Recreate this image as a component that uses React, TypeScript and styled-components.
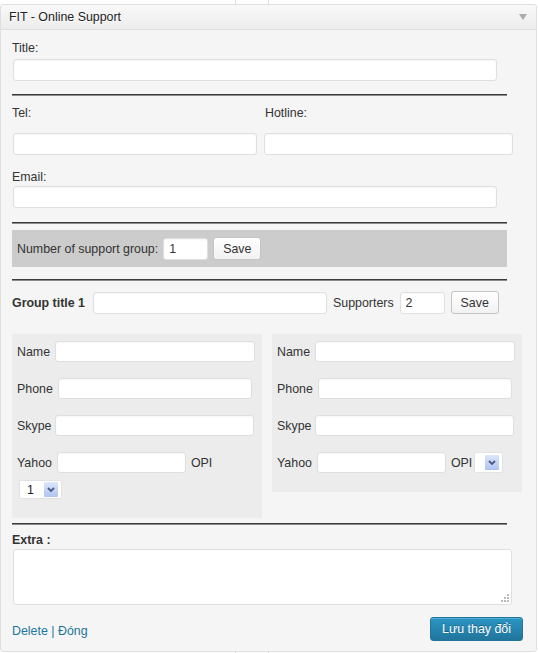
import React from "react";
import styled, { createGlobalStyle } from "styled-components";

const FONT = `12.4px "Liberation Sans", Arial, sans-serif`;

const GlobalStyle = createGlobalStyle`
  html, body { margin: 0; padding: 0; background: #fff; }
  body {
    font: ${FONT};
    color: #333;
  }
  * { box-sizing: border-box; }
`;

const Page = styled.div`
  position: relative;
  width: 538px;
  height: 653px;
  padding-top: 4px;
`;

const Backdrop = styled.div`
  position: absolute;
  top: 0;
  bottom: 0;
  left: 235px;
  width: 34px;
  border-left: 1px solid #dcdcdc;
  border-right: 1px solid #dcdcdc;
  z-index: 0;
`;

const Widget = styled.div`
  position: relative;
  z-index: 1;
  width: 537px;
  background: #f5f5f5;
  border: 1px solid #dfdfdf;
  border-radius: 3px;
`;

const Header = styled.div`
  height: 25px;
  display: flex;
  align-items: center;
  justify-content: space-between;
  padding: 0 9px 0 8px;
  background: linear-gradient(to bottom, #f9f9f9, #ececec);
  border-bottom: 1px solid #dfdfdf;
  border-radius: 3px 3px 0 0;
`;

const HeaderTitle = styled.h3`
  margin: 0;
  font: ${FONT};
  color: #222;
  text-shadow: 0 1px 0 #fff;
`;

const Body = styled.div`
  padding: 10px 0 10px 11px;
`;

const Label = styled.label<{ $bold?: boolean; $indent?: number }>`
  display: block;
  line-height: 16px;
  font-weight: ${(p) => (p.$bold ? "bold" : "normal")};
  padding-left: ${(p) => p.$indent ?? 0}px;
`;

const TextInput = styled.input<{ $w: number; $h?: number }>`
  display: block;
  width: ${(p) => p.$w}px;
  height: ${(p) => p.$h ?? 22}px;
  margin: 0;
  padding: 2px 5px;
  font: ${FONT};
  color: #333;
  background: #fff;
  border: 1px solid #dfdfdf;
  border-radius: 3px;
  box-shadow: inset 0 1px 2px rgba(0, 0, 0, 0.04);
  outline: none;
`;

const Field = styled.div<{ $labelGap: number; $top?: number }>`
  margin-top: ${(p) => p.$top ?? 0}px;
  display: flex;
  flex-direction: column;
  gap: ${(p) => p.$labelGap}px;
  padding-left: 1px;
  & > label { margin-left: -1px; }
`;

const Rule = styled.hr<{ $top: number; $bottom: number }>`
  width: 495px;
  height: 2px;
  margin: ${(p) => p.$top}px 0 ${(p) => p.$bottom}px 0;
  border: 0;
  background: linear-gradient(to bottom, #3c3c3c 50%, #8a8a8a 50%);
`;

const TwoCols = styled.div`
  display: grid;
  grid-template-columns: 251px 252px;
`;

const Band = styled.div`
  width: 495px;
  height: 37px;
  background: #cccccc;
  display: flex;
  align-items: center;
  padding-left: 5px;
  gap: 5px;
`;

const Button = styled.button`
  height: 23px;
  padding: 0 9px;
  font: ${FONT};
  color: #333;
  background: linear-gradient(to bottom, #fefefe, #f2f2f2);
  border: 1px solid #c4c4c4;
  border-radius: 3px;
  cursor: pointer;
`;

const InlineRow = styled.div<{ $gap?: number }>`
  display: flex;
  align-items: center;
  gap: ${(p) => p.$gap ?? 5}px;
`;

const GroupTitle = styled.span`
  font-weight: bold;
  white-space: nowrap;
  margin-right: 2px;
`;

const Columns = styled.div`
  margin-top: 20px;
  display: flex;
  align-items: flex-start;
  gap: 10px;
`;

const GroupBox = styled.div`
  width: 250px;
  background: #ececec;
  padding: 7px 5px 19px 5px;
  display: flex;
  flex-direction: column;
  gap: 16px;
`;

const SelectBox = styled.div<{ $w: number }>`
  display: flex;
  align-items: center;
  justify-content: space-between;
  width: ${(p) => p.$w}px;
  height: ${(p) => (p.$w > 35 ? 19 : 21)}px;
  padding: 0 3px 0 7px;
  background: #fff;
  border: 1px solid #e2e2e2;
  border-radius: 2px;
  color: #222;
`;

const ArrowBox = styled.span`
  width: 14px;
  height: 15px;
  display: flex;
  align-items: center;
  justify-content: center;
  background: linear-gradient(to bottom, #dde7fb, #aec3f0);
  border-radius: 1px;
`;

const SelectLine = styled.div`
  margin-top: -9px;
  padding-left: 2px;
`;

const InlineSelect = styled.div`
  margin-left: -3px;
`;

const TextAreaWrap = styled.div`
  position: relative;
  margin-top: 1px;
  margin-left: 1px;
  width: 499px;
  height: 56px;
`;

const TextArea = styled.textarea`
  display: block;
  width: 100%;
  height: 100%;
  resize: none;
  background: #fff;
  border: 1px solid #dfdfdf;
  border-radius: 3px;
  outline: none;
  font: ${FONT};
`;

const Grip = styled.svg`
  position: absolute;
  right: 3px;
  bottom: 3px;
`;

const Footer = styled.div`
  margin-top: 12px;
  width: 511px;
  display: flex;
  align-items: center;
  justify-content: space-between;
`;

const Links = styled.div`
  color: #21759b;
  padding-top: 3px;
`;

const Link = styled.a`
  color: #21759b;
  text-decoration: none;
`;

const PrimaryButton = styled.button`
  height: 24px;
  padding: 0 11px;
  font: ${FONT};
  color: #fff;
  background: linear-gradient(to bottom, #2a95c5, #21759b);
  border: 1px solid #21759b;
  border-radius: 3px;
  box-shadow: inset 0 1px 0 rgba(120, 200, 230, 0.5);
  text-shadow: 0 -1px 0 rgba(0, 0, 0, 0.3);
  cursor: pointer;
`;

const Chevron = () => (
  <svg width="8" height="6" viewBox="0 0 8 6">
    <path d="M1 1 L4 4 L7 1" fill="none" stroke="#4b5b80" strokeWidth="1.8" />
  </svg>
);

const Select = ({ value, w }: { value?: string; w: number }) => (
  <SelectBox $w={w}>
    <span>{value ?? ""}</span>
    <ArrowBox>
      <Chevron />
    </ArrowBox>
  </SelectBox>
);

type Row = { label: string; w: number; gap: number };
const rows: Row[] = [
  { label: "Name", w: 200, gap: 5 },
  { label: "Phone", w: 194, gap: 5 },
  { label: "Skype", w: 199, gap: 4 },
];

const Group = ({ wrapSelect }: { wrapSelect: boolean }) => (
  <GroupBox>
    {rows.map((r) => (
      <InlineRow key={r.label} $gap={r.gap}>
        <span>{r.label}</span>
        <TextInput $w={r.w} $h={21} />
      </InlineRow>
    ))}
    <InlineRow $gap={5}>
      <span>Yahoo</span>
      <TextInput $w={129} $h={21} />
      <span>OPI</span>
      {!wrapSelect && (
        <InlineSelect>
          <Select w={29} />
        </InlineSelect>
      )}
    </InlineRow>
    {wrapSelect && (
      <SelectLine>
        <Select value="1" w={43} />
      </SelectLine>
    )}
  </GroupBox>
);

export default function App() {
  return (
    <>
      <GlobalStyle />
      <Page>
        <Backdrop />
        <Widget>
          <Header>
            <HeaderTitle>FIT - Online Support</HeaderTitle>
            <svg width="8" height="6" viewBox="0 0 8 6">
              <path d="M0 0 H8 L4 6 Z" fill="#aaa" />
            </svg>
          </Header>
          <Body>
            <Field $labelGap={3}>
              <Label>Title:</Label>
              <TextInput $w={484} />
            </Field>
            <Rule $top={13} $bottom={9} />
            <TwoCols>
              <Field $labelGap={12}>
                <Label>Tel:</Label>
                <TextInput $w={244} />
              </Field>
              <Field $labelGap={12}>
                <Label $indent={2}>Hotline:</Label>
                <TextInput $w={249} />
              </Field>
            </TwoCols>
            <Field $labelGap={1} $top={14}>
              <Label>Email:</Label>
              <TextInput $w={484} />
            </Field>
            <Rule $top={14} $bottom={6} />
            <Band>
              <span>Number of support group:</span>
              <TextInput $w={45} defaultValue="1" />
              <Button>Save</Button>
            </Band>
            <Rule $top={12} $bottom={10} />
            <InlineRow $gap={6}>
              <GroupTitle>Group title 1</GroupTitle>
              <TextInput $w={234} />
              <span>Supporters</span>
              <TextInput $w={45} defaultValue="2" />
              <Button>Save</Button>
            </InlineRow>
            <Columns>
              <Group wrapSelect />
              <Group wrapSelect={false} />
            </Columns>
            <Rule $top={5} $bottom={7} />
            <Label $bold>Extra :</Label>
            <TextAreaWrap>
              <TextArea />
              <Grip width="9" height="9" viewBox="0 0 9 9">
                <g fill="#bbb">
                  <rect x="7" y="1" width="2" height="2" />
                  <rect x="4" y="4" width="2" height="2" />
                  <rect x="7" y="4" width="2" height="2" />
                  <rect x="1" y="7" width="2" height="2" />
                  <rect x="4" y="7" width="2" height="2" />
                  <rect x="7" y="7" width="2" height="2" />
                </g>
              </Grip>
            </TextAreaWrap>
            <Footer>
              <Links>
                <Link href="#">Delete</Link> | <Link href="#">Đóng</Link>
              </Links>
              <PrimaryButton>Lưu thay đổi</PrimaryButton>
            </Footer>
          </Body>
        </Widget>
      </Page>
    </>
  );
}
